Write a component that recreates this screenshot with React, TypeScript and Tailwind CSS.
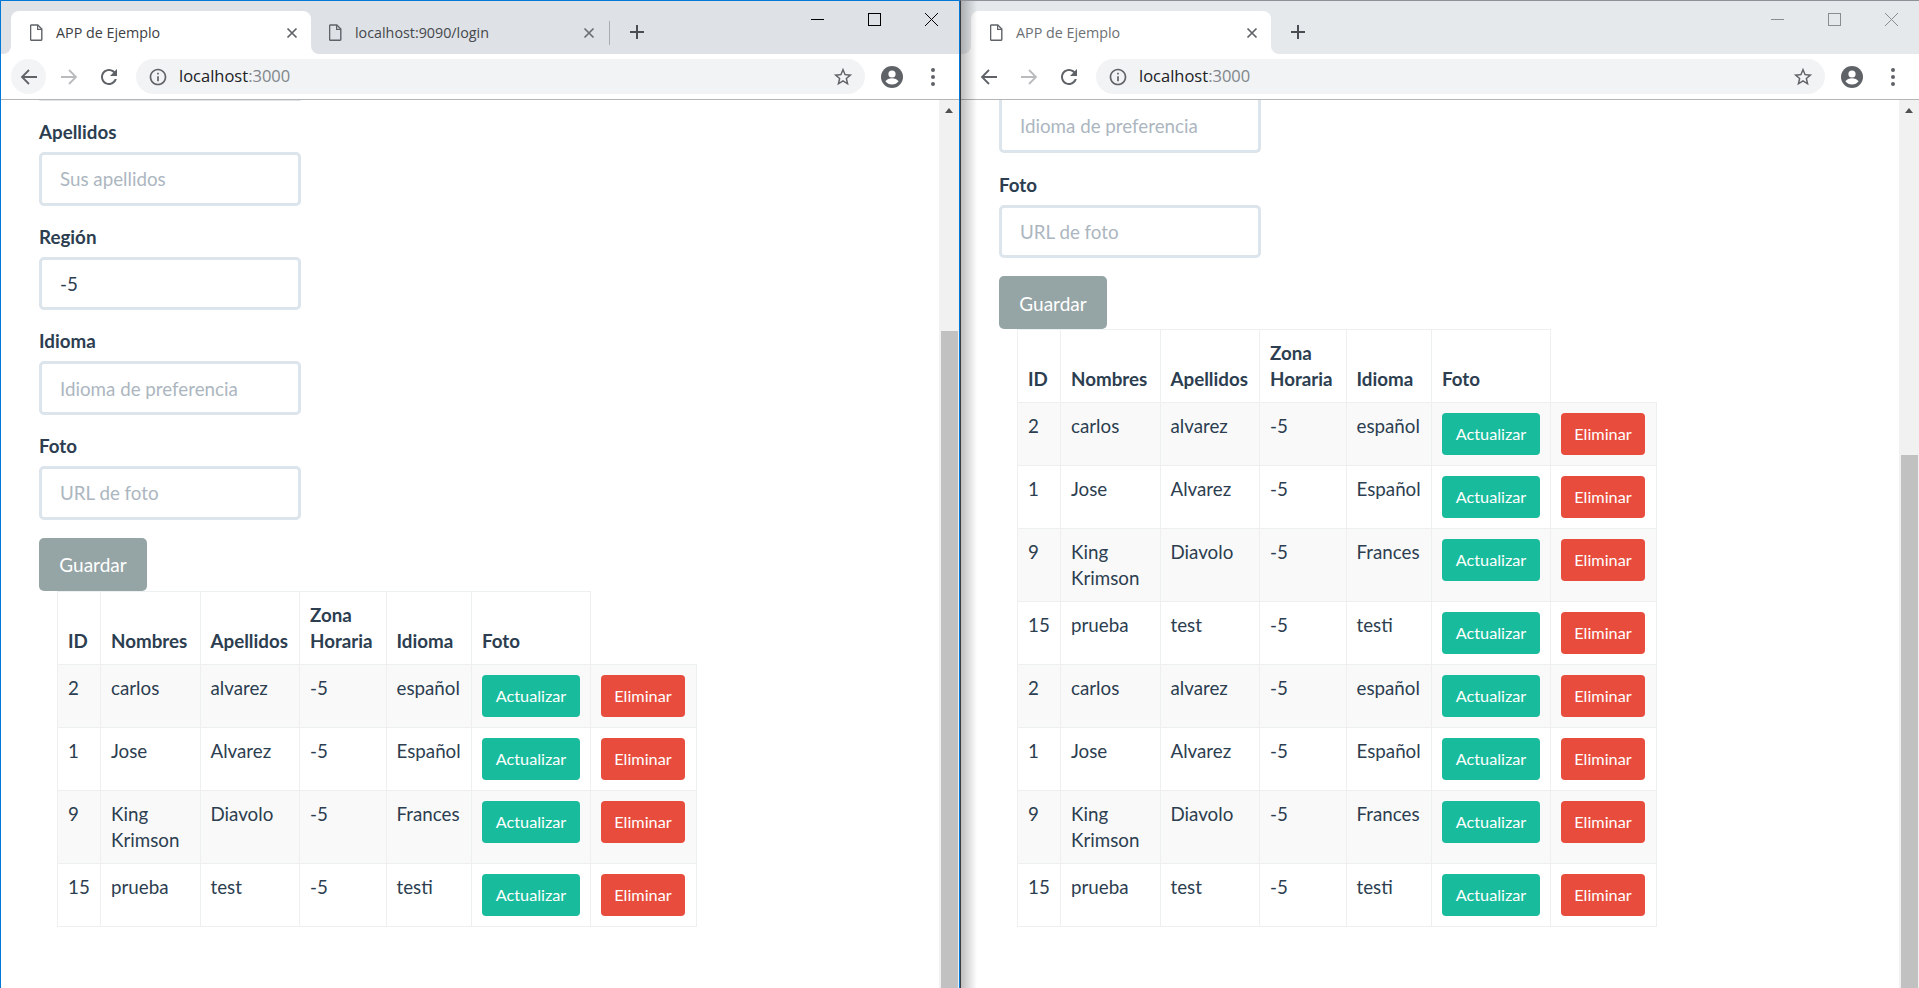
const text = "text-[#2c3e50]";

type Row = { id: string; nombres: string; apellidos: string; idioma: string };

const rowsA: Row[] = [
  { id: "2", nombres: "carlos", apellidos: "alvarez", idioma: "español" },
  { id: "1", nombres: "Jose", apellidos: "Alvarez", idioma: "Español" },
  { id: "9", nombres: "King Krimson", apellidos: "Diavolo", idioma: "Frances" },
  { id: "15", nombres: "prueba", apellidos: "test", idioma: "testi" },
];

function FileIcon({ className = "" }: { className?: string }) {
  return (
    <svg width="13" height="17" viewBox="0 0 13 17" fill="none" className={className}>
      <path d="M1.2 1h6.6l4 4v10.6a.6.6 0 0 1-.6.6H1.2a.6.6 0 0 1-.6-.6V1.6A.6.6 0 0 1 1.2 1z" stroke="#5f6368" strokeWidth="1.4" />
      <path d="M7.6 1v4.4H12" stroke="#5f6368" strokeWidth="1.2" />
    </svg>
  );
}

function CloseIcon({ color = "#5f6368" }: { color?: string }) {
  return (
    <svg width="12" height="12" viewBox="0 0 12 12" fill="none">
      <path d="M1.5 1.500l9 9M10.500 1.500l-9 9" stroke={color} strokeWidth="1.7" />
    </svg>
  );
}

function Plus() {
  return (
    <svg width="16" height="16" viewBox="0 0 16 16" fill="none">
      <path d="M8 1v14M1 8h14" stroke="#4a4d51" strokeWidth="2" />
    </svg>
  );
}

function TabStrip({ active, stripClass, flareClass, titleClass, controls }: { active: boolean; stripClass: string; flareClass: string; titleClass: string; controls: string }) {
  return (
    <div className={`relative h-[53px] flex items-end pl-[10px] ${stripClass}`}>
      {/* current tab */}
      <div className="relative w-[300px] h-[43px] bg-white rounded-t-[8px] flex items-center pl-[19px]">
        <div className="absolute bottom-0 -left-[8px] w-[8px] h-[8px] bg-white">
          <div className={`w-full h-full rounded-br-[8px] ${flareClass}`} />
        </div>
        <div className="absolute bottom-0 -right-[8px] w-[8px] h-[8px] bg-white">
          <div className={`w-full h-full rounded-bl-[8px] ${flareClass}`} />
        </div>
        <FileIcon />
        <span className={`ml-[13px] flex-1 text-[14.3px] font-['Open_Sans',sans-serif] ${titleClass}`}>APP de Ejemplo</span>
        <div className="mr-[13px] flex"><CloseIcon /></div>
      </div>

      {active ? (
        <>
          <div className="w-[298px] h-[43px] flex items-center pl-[18px]">
            <FileIcon />
            <span className="ml-[13px] flex-1 text-[14.3px] text-[#45484c] font-['Open_Sans',sans-serif]">localhost:9090/login</span>
            <div className="mr-[14px] flex"><CloseIcon color="#6b6e72" /></div>
          </div>
          <div className="h-[24px] w-px bg-[#a9acb0] mb-[9px]" />
          <div className="ml-[19px] mb-[14px] flex"><Plus /></div>
        </>
      ) : (
        <div className="ml-[19px] mb-[14px] flex"><Plus /></div>
      )}

      {/* window buttons */}
      <div className="absolute top-[12px] right-[21px] flex items-center gap-[44px]">
        <div className={`w-[13px] h-px ${controls === "dark" ? "bg-black" : "bg-[#8a8d90]"}`} />
        <div className={`w-[13px] h-[13px] border ${controls === "dark" ? "border-black" : "border-[#8a8d90]"}`} />
        <svg width="13" height="13" viewBox="0 0 13 13" fill="none">
          <path d="M0 0l13 13M13 0L0 13" stroke={controls === "dark" ? "#000" : "#8a8d90"} strokeWidth="1" />
        </svg>
      </div>
    </div>
  );
}

function Toolbar({ hoverBack }: { hoverBack: boolean }) {
  return (
    <div className="h-[46px] bg-white border-b border-[#b5b5b5] flex items-start pt-[5px] pl-[10px]">
      <div className={`w-[35px] h-[35px] rounded-full flex items-center justify-center ${hoverBack ? "bg-[#f3f4f5]" : ""}`}>
        <svg width="24" height="24" viewBox="0 0 24 24" fill="none">
          <path d="M20 12H5.500M12 5l-7 7 7 7" stroke="#5f6368" strokeWidth="1.8" />
        </svg>
      </div>
      <div className="ml-[5px] w-[35px] h-[35px] flex items-center justify-center">
        <svg width="24" height="24" viewBox="0 0 24 24" fill="none">
          <path d="M4 12h14.500M12 5l7 7-7 7" stroke="#b9bbbe" strokeWidth="1.8" />
        </svg>
      </div>
      <div className="ml-[5px] w-[35px] h-[35px] flex items-center justify-center">
        <svg width="24" height="24" viewBox="0 0 24 24" fill="#5f6368">
          <path d="M17.65 6.35C16.2 4.9 14.21 4 12 4c-4.42 0-7.99 3.58-7.99 8s3.57 8 7.99 8c3.73 0 6.84-2.55 7.73-6h-2.08c-.82 2.33-3.04 4-5.65 4-3.31 0-6-2.69-6-6s2.69-6 6-6c1.66 0 3.14.69 4.22 1.78L13 11h7V4l-2.35 2.35z" />
        </svg>
      </div>
      <div className="ml-[10px] w-[729px] h-[35px] rounded-full bg-[#f1f3f4] flex items-center pl-[12px] pr-[6px]">
        <svg width="20" height="20" viewBox="0 0 24 24" fill="#5f6368">
          <path d="M11 7h2v2h-2zm0 4h2v6h-2zm1-9C6.48 2 2 6.48 2 12s4.48 10 10 10 10-4.48 10-10S17.52 2 12 2zm0 18c-4.41 0-8-3.59-8-8s3.59-8 8-8 8 3.59 8 8-3.59 8-8 8z" />
        </svg>
        <span className="ml-[11px] flex-1 text-[16.5px] font-['Open_Sans',sans-serif] text-[#202124]">
          localhost<span className="text-[#80868b]">:3000</span>
        </span>
        <svg width="22" height="22" viewBox="0 0 24 24" fill="#5f6368" className="mr-[5px]">
          <path d="M22 9.24l-7.19-.62L12 2 9.19 8.63 2 9.24l5.46 4.73L5.82 21 12 17.27 18.18 21l-1.63-7.03L22 9.24zM12 15.4l-3.76 2.27 1-4.28-3.32-2.88 4.38-.38L12 6.1l1.71 4.04 4.38.38-3.32 2.88 1 4.28L12 15.4z" />
        </svg>
      </div>
      <div className="ml-[9px] w-[35px] h-[35px] flex items-center justify-center">
        <svg width="22" height="22" viewBox="0 0 22 22">
          <circle cx="11" cy="11" r="11" fill="#5f6368" />
          <circle cx="11" cy="8" r="3.6" fill="#fff" />
          <path d="M4.400 15.200c1.400-2 4-3 6.600-3s5.200 1 6.600 3c-1.500 2-3.900 3.300-6.600 3.300s-5.100-1.300-6.600-3.300z" fill="#fff" />
        </svg>
      </div>
      <div className="ml-[6px] w-[35px] h-[35px] flex flex-col items-center justify-center gap-[3px]">
        <div className="w-[4px] h-[4px] rounded-full bg-[#5f6368]" />
        <div className="w-[4px] h-[4px] rounded-full bg-[#5f6368]" />
        <div className="w-[4px] h-[4px] rounded-full bg-[#5f6368]" />
      </div>
    </div>
  );
}

function Field({ label, placeholder, value }: { label: string; placeholder: string; value?: string }) {
  return (
    <div className="mb-[18px]">
      <div className={`h-[27px] mb-[6px] text-[18.75px] leading-[25px] font-bold ${text}`}>{label}</div>
      <InputBox placeholder={placeholder} value={value} />
    </div>
  );
}

function InputBox({ placeholder, value, className = "h-[53.7px] pt-px" }: { placeholder: string; value?: string; className?: string }) {
  return (
    <div className={`w-[262px] border-[3px] border-[#dce4ec] rounded-[5px] flex items-center pl-[18px] text-[18.75px] ${className} ${value ? text : "text-[#acb6c0]"}`}>
      {value || placeholder}
    </div>
  );
}

function Scrollbar({ offset }: { offset: string }) {
  return (
    <div className="w-[20px] shrink-0 bg-[#f1f1f1] flex flex-col">
      <div className={`relative shrink-0 ${offset}`}>
        <div className="absolute top-[8px] left-[6px] w-0 h-0 border-l-[4.5px] border-r-[4.5px] border-b-[5px] border-l-transparent border-r-transparent border-b-[#505050]" />
      </div>
      <div className="flex-1 ml-[2px] mr-px bg-[#c1c1c1]" />
    </div>
  );
}

function DataRow({ row, striped }: { row: Row; striped: boolean }) {
  const cell = "border border-[#ecf0f1] px-[10px] pt-[10px] pb-[10px] align-top";
  return (
    <tr className={striped ? "bg-[#f9f9f9]" : ""}>
      <td className={cell}>{row.id}</td>
      <td className={cell}>{row.nombres}</td>
      <td className={cell}>{row.apellidos}</td>
      <td className={cell}>-5</td>
      <td className={cell}>{row.idioma}</td>
      <td className={cell}>
        <button className="block w-[98px] h-[42px] bg-[#18bc9c] text-white text-[16.25px] rounded-[4px]">Actualizar</button>
      </td>
      <td className={cell}>
        <button className="block w-[84px] h-[42px] bg-[#e74c3c] text-white text-[16.25px] rounded-[4px]">Eliminar</button>
      </td>
    </tr>
  );
}

function UsersTable({ rows }: { rows: Row[] }) {
  const th = "border border-[#ecf0f1] px-[10px] pb-[10px] pt-[10px] align-bottom text-left font-bold";
  return (
    <table className={`ml-[18px] w-[639px] table-fixed border-collapse text-[18.75px] leading-[26px] ${text}`}>
      <colgroup>
        <col className="w-[43px]" />
        <col className="w-[99.5px]" />
        <col className="w-[99.5px]" />
        <col className="w-[86.5px]" />
        <col className="w-[85.5px]" />
        <col className="w-[119px]" />
        <col className="w-[106px]" />
      </colgroup>
      <thead>
        <tr>
          <th className={th}>ID</th>
          <th className={th}>Nombres</th>
          <th className={th}>Apellidos</th>
          <th className={th}>Zona Horaria</th>
          <th className={th}>Idioma</th>
          <th className={th}>Foto</th>
        </tr>
      </thead>
      <tbody>
        {rows.map((row, i) => (
          <DataRow key={i} row={row} striped={i % 2 === 0} />
        ))}
      </tbody>
    </table>
  );
}

function SaveButton() {
  return (
    <button className="block w-[108px] h-[53px] pt-[2px] rounded-[5px] bg-[#95a5a6] text-white text-[19px]">Guardar</button>
  );
}

export default function App() {
  return (
    <div className="flex w-screen h-screen overflow-hidden bg-white font-['Lato',sans-serif]">
      {/* left window */}
      <div className="w-[960px] h-full flex flex-col border-t border-l border-r border-[#0078d7]">
        <TabStrip active stripClass="bg-[#dee1e6]" flareClass="bg-[#dee1e6]" titleClass="text-[#3c4043]" controls="dark" />
        <Toolbar hoverBack />
        <div className="flex-1 min-h-0 flex">
          <main className="flex-1 min-w-0 overflow-hidden pl-[38px]">
            <div className="w-[262px] h-px bg-[#dce4ec] mb-[18px] rounded-b-[4px]" />
            <Field label="Apellidos" placeholder="Sus apellidos" />
            <Field label="Región" placeholder="" value="-5" />
            <Field label="Idioma" placeholder="Idioma de preferencia" />
            <Field label="Foto" placeholder="URL de foto" />
            <SaveButton />
            <UsersTable rows={rowsA} />
          </main>
          <Scrollbar offset="h-[231px]" />
        </div>
      </div>

      {/* right window, not focused */}
      <div className="relative w-[959px] h-full flex flex-col border-t border-l border-t-[#8d9298] border-l-[#3c3c3c]">
        <TabStrip active={false} stripClass="bg-[#e6e9ec]" flareClass="bg-[#e6e9ec]" titleClass="text-[#6c7074]" controls="light" />
        <Toolbar hoverBack={false} />
        <div className="flex-1 min-h-0 flex">
          <main className="flex-1 min-w-0 overflow-hidden pl-[38px]">
            <div className="mb-[19px]">
              <InputBox placeholder="Idioma de preferencia" className="h-[52.7px] pt-[2px] border-t-0 rounded-t-none" />
            </div>
            <Field label="Foto" placeholder="URL de foto" />
            <SaveButton />
            <UsersTable rows={[...rowsA, ...rowsA]} />
          </main>
          <Scrollbar offset="h-[355px]" />
        </div>
        {/* shadow the left window throws */}
        <div className="absolute inset-y-0 left-0 w-[16px] bg-gradient-to-r from-black/25 to-transparent pointer-events-none" />
      </div>
    </div>
  );
}
